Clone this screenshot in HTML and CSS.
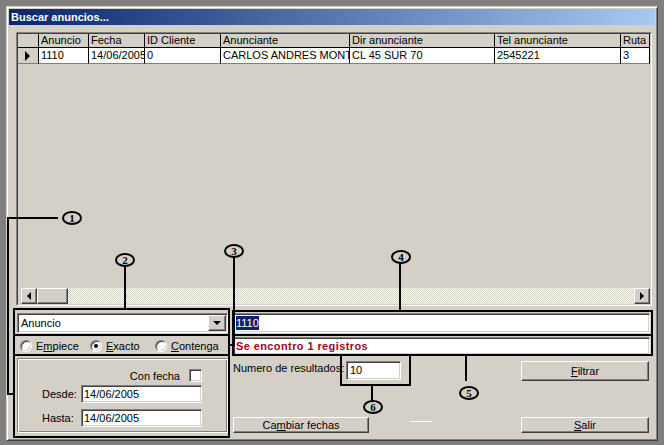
FILE: index.html
```html
<!DOCTYPE html>
<html>
<head>
<meta charset="utf-8">
<title>Buscar anuncios</title>
<link rel="stylesheet" href="styles.css">
</head>
<body>
<div class="window">
  <div class="titlebar">Buscar anuncios...</div>
  <div class="client">
    <div class="grid">
      <div class="grid-inner">
        <div class="table">
          <div class="cell ind hdr"></div>
          <div class="cell hdr">Anuncio</div>
          <div class="cell hdr">Fecha</div>
          <div class="cell hdr">ID Cliente</div>
          <div class="cell hdr">Anunciante</div>
          <div class="cell hdr">Dir anunciante</div>
          <div class="cell hdr">Tel anunciante</div>
          <div class="cell hdr">Ruta</div>
          <div class="cell ind row"><span class="row-arrow"></span></div>
          <div class="cell row">1110</div>
          <div class="cell row">14/06/2005</div>
          <div class="cell row">0</div>
          <div class="cell row">CARLOS ANDRES MONT</div>
          <div class="cell row">CL 45 SUR 70</div>
          <div class="cell row">2545221</div>
          <div class="cell row">3</div>
        </div>
        <div class="hscroll">
          <div class="sbtn"><span class="tri-l"></span></div>
          <div class="thumb"></div>
          <div class="track"></div>
          <div class="sbtn"><span class="tri-r"></span></div>
        </div>
      </div>
    </div>

    <div class="bottom">
      <div class="left-col">
        <div class="combo">
          <span class="combo-text">Anuncio</span>
          <span class="combo-btn"><span class="tri-d"></span></span>
        </div>
        <div class="radios">
          <div class="radio r1"><span class="rb"></span><span>E<u>m</u>piece</span></div>
          <div class="radio r2"><span class="rb checked"></span><span><u>E</u>xacto</span></div>
          <div class="radio r3"><span class="rb"></span><span><u>C</u>ontenga</span></div>
        </div>
        <div class="group">
          <div class="chk-row"><span>Con fecha</span><span class="chk"></span></div>
          <div class="date-row first"><span class="dlabel">Desde:</span><span class="field date">14/06/2005</span></div>
          <div class="date-row second"><span class="dlabel">Hasta:</span><span class="field date">14/06/2005</span></div>
        </div>
      </div>

      <div class="right-col">
        <div class="field search"><span class="sel">1110</span></div>
        <div class="field msg">Se encontro 1 registros</div>
        <div class="row1">
          <span class="nlabel">Numero de resultados:</span>
          <span class="field num">10</span>
          <span class="btn filtrar"><u>F</u>iltrar</span>
        </div>
        <div class="row2">
          <span class="btn cambiar">Ca<u>m</u>biar fechas</span>
          <span class="hline"></span>
          <span class="btn salir"><u>S</u>alir</span>
        </div>
      </div>
    </div>
  </div>
</div>

<div class="annot">
  <div class="ln l1h"></div>
  <div class="ln l1v"></div>
  <div class="ln l1b"></div>
  <div class="ln l2"></div>
  <div class="ln l3"></div>
  <div class="ln l3b"></div>
  <div class="ln l4"></div>
  <div class="ln l5"></div>
  <div class="ln l6"></div>
  <div class="box bA"></div>
  <div class="ln hA1"></div>
  <div class="ln hA2"></div>
  <div class="box bB"></div>
  <div class="ln hB"></div>
  <div class="box bC"></div>
  <div class="num-c c1">1</div>
  <div class="num-c c2">2</div>
  <div class="num-c c3">3</div>
  <div class="num-c c4">4</div>
  <div class="num-c c5">5</div>
  <div class="num-c c6">6</div>
</div>
</body>
</html>
```

FILE: styles.css
```css
* { box-sizing: border-box; }
html, body { margin: 0; padding: 0; }
body {
  width: 664px;
  height: 445px;
  overflow: hidden;
  background: #808080;
  font-family: "Liberation Sans", Arial, sans-serif;
  font-size: 11px;
  color: #000;
  position: relative;
}

/* window frame */
.window {
  margin: 6px 0 0 6px;
  width: 652px;
  height: 435px;
  background: #d4d0c8;
  border: 1px solid;
  border-color: #d4d0c8 #404040 #404040 #d4d0c8;
  box-shadow: inset 1px 1px #fff, inset -1px -1px #808080;
  padding: 2px;
}
.titlebar {
  height: 16px;
  line-height: 16px;
  padding-left: 2px;
  background: linear-gradient(to right, #0a246a, #a6caf0);
  color: #fff;
  font-weight: bold;
}
.client {
  padding: 7px 0 0 7px;
}

/* data grid */
.grid {
  width: 636px;
  height: 274px;
  border: 1px solid;
  border-color: #808080 #fff #fff #808080;
}
.grid-inner {
  height: 100%;
  border: 1px solid;
  border-color: #404040 #d4d0c8 #d4d0c8 #404040;
  display: flex;
  flex-direction: column;
  justify-content: space-between;
}
.table {
  display: grid;
  grid-template-columns: 21px 50px 56px 76px 129px 145px 126px 29px;
  grid-template-rows: 14px 16px;
}
.cell {
  border-right: 1px solid #000;
  border-bottom: 1px solid #000;
  padding-left: 2px;
  line-height: 13px;
  white-space: nowrap;
  overflow: hidden;
}
.cell.row { background: #fff; line-height: 15px; border-bottom-color: #808080; }
.cell.ind { background: #d4d0c8; display: flex; align-items: center; padding-left: 7px; }
.row-arrow {
  width: 0; height: 0;
  border-top: 5px solid transparent;
  border-bottom: 5px solid transparent;
  border-left: 5px solid #000;
}

.hscroll {
  height: 16px;
  display: flex;
  padding-left: 3px;
}
.sbtn, .thumb, .combo-btn, .btn {
  background: #d4d0c8;
  border: 1px solid;
  border-color: #fff #404040 #404040 #fff;
  box-shadow: inset -1px -1px #808080, inset 1px 1px #d4d0c8;
}
.sbtn {
  width: 16px;
  height: 16px;
  display: flex;
  align-items: center;
  justify-content: center;
}
.thumb { width: 31px; height: 16px; }
.track {
  flex: 1;
  background-image: repeating-conic-gradient(#fff 0 25%, #d4d0c8 0 50%);
  background-size: 2px 2px;
}
.tri-l {
  width: 0; height: 0;
  border-top: 4px solid transparent;
  border-bottom: 4px solid transparent;
  border-right: 4px solid #000;
}
.tri-r {
  width: 0; height: 0;
  border-top: 4px solid transparent;
  border-bottom: 4px solid transparent;
  border-left: 4px solid #000;
}
.tri-d {
  width: 0; height: 0;
  border-left: 4px solid transparent;
  border-right: 4px solid transparent;
  border-top: 4px solid #000;
}

/* bottom panel */
.bottom {
  display: flex;
  margin-top: 7px;
  padding-left: 1px;
  gap: 5px;
}
.left-col { width: 211px; }
.right-col { width: 417px; }

.field {
  background: #fff;
  border: 1px solid;
  border-color: #808080 #fff #fff #808080;
  box-shadow: inset 1px 1px #404040, inset -1px -1px #d4d0c8;
  white-space: nowrap;
  overflow: hidden;
}

.combo {
  height: 20px;
  display: flex;
  align-items: center;
  background: #fff;
  border: 1px solid;
  border-color: #808080 #fff #fff #808080;
  box-shadow: inset 1px 1px #404040, inset -1px -1px #d4d0c8;
  padding-left: 3px;
}
.combo-btn {
  margin-left: auto;
  margin-right: 1px;
  width: 18px;
  height: 16px;
  display: flex;
  align-items: center;
  justify-content: center;
}

.radios {
  margin-top: 3px;
  height: 19px;
  display: flex;
  align-items: center;
  padding-left: 3px;
}
.radio { display: flex; align-items: center; gap: 4px; }
.r1 { width: 70px; }
.r2 { width: 65px; }
.rb {
  width: 12px;
  height: 12px;
  border-radius: 50%;
  background: #fff;
  border: 1px solid;
  border-color: #808080 #fff #fff #808080;
  box-shadow: inset 1px 1px #404040, inset -1px -1px #d4d0c8;
  display: flex;
  align-items: center;
  justify-content: center;
}
.rb.checked::after {
  content: "";
  width: 4px;
  height: 4px;
  border-radius: 50%;
  background: #000;
}

.group {
  margin-top: 3px;
  height: 75px;
  border: 1px solid;
  border-color: #808080 #fff #fff #808080;
  box-shadow: inset 1px 1px #fff, inset -1px -1px #808080;
  padding: 10px 25px 0 24px;
}
.chk-row {
  height: 13px;
  display: flex;
  align-items: center;
  justify-content: flex-end;
  gap: 9px;
}
.chk {
  width: 13px;
  height: 13px;
  background: #fff;
  border: 1px solid;
  border-color: #808080 #fff #fff #808080;
  box-shadow: inset 1px 1px #404040, inset -1px -1px #d4d0c8;
}
.date-row { display: flex; align-items: center; }
.date-row.first { margin-top: 3px; }
.date-row.second { margin-top: 6px; }
.dlabel { width: 39px; }
.field.date {
  width: 121px;
  height: 18px;
  line-height: 16px;
  padding-left: 2px;
}

.field.search {
  height: 20px;
  padding: 2px 0 0 2px;
  line-height: 14px;
}
.sel {
  display: inline-block;
  background: #0a246a;
  color: #fff;
  line-height: 14px;
}
.field.msg {
  margin-top: 4px;
  height: 18px;
  line-height: 16px;
  padding-left: 2px;
  color: #a8001e;
  font-weight: bold;
  letter-spacing: 0.4px;
}
.row1 {
  margin-top: 6px;
  height: 20px;
  display: flex;
  align-items: flex-start;
}
.nlabel { width: 113px; padding-top: 1px; }
.field.num {
  width: 55px;
  height: 19px;
  line-height: 17px;
  padding-left: 3px;
}
.btn {
  display: flex;
  align-items: center;
  justify-content: center;
}
.filtrar { margin-left: auto; margin-right: 1px; width: 128px; height: 20px; }
.row2 {
  margin-top: 36px;
  height: 16px;
  display: flex;
  align-items: flex-start;
}
.cambiar { width: 136px; height: 16px; }
.hline {
  width: 22px;
  height: 1px;
  background: #fff;
  margin: 4px 0 0 41px;
}
.salir { margin-left: auto; margin-right: 1px; width: 128px; height: 16px; }

/* annotation overlay */
.annot {
  position: absolute;
  left: 0;
  top: 0;
  width: 664px;
  height: 445px;
  pointer-events: none;
}
.ln { position: absolute; background: #000; }
.l1h { left: 7px; top: 217px; width: 51px; height: 2px; }
.l1v { left: 7px; top: 217px; width: 2px; height: 178px; }
.l1b { left: 7px; top: 393px; width: 7px; height: 2px; }
.l2 { left: 124px; top: 267px; width: 2px; height: 42px; }
.l3 { left: 233px; top: 256px; width: 2px; height: 90px; }
.l3b { left: 228px; top: 344px; width: 6px; height: 2px; }
.l4 { left: 399px; top: 263px; width: 2px; height: 48px; }
.l5 { left: 465px; top: 355px; width: 2px; height: 26px; }
.l6 { left: 371px; top: 385px; width: 2px; height: 16px; }

.box { position: absolute; border: 2px solid #000; }
.bA { left: 13px; top: 308px; width: 217px; height: 130px; }
.hA1 { left: 13px; top: 334px; width: 217px; height: 2px; }
.hA2 { left: 13px; top: 354px; width: 217px; height: 2px; }
.bB { left: 232px; top: 310px; width: 421px; height: 46px; }
.hB { left: 232px; top: 334px; width: 421px; height: 2px; }
.bC { left: 340px; top: 354px; width: 71px; height: 32px; }

.num-c {
  position: absolute;
  width: 20px;
  height: 14px;
  border: 2px solid #000;
  border-radius: 50%;
  background: #d4d0c8;
  font-family: "Liberation Serif", "Times New Roman", serif;
  font-weight: bold;
  font-size: 11px;
  line-height: 10px;
  text-align: center;
}
.c1 { left: 62px; top: 211px; }
.c2 { left: 115px; top: 253px; }
.c3 { left: 224px; top: 244px; }
.c4 { left: 391px; top: 250px; }
.c5 { left: 459px; top: 386px; }
.c6 { left: 363px; top: 400px; }
```
